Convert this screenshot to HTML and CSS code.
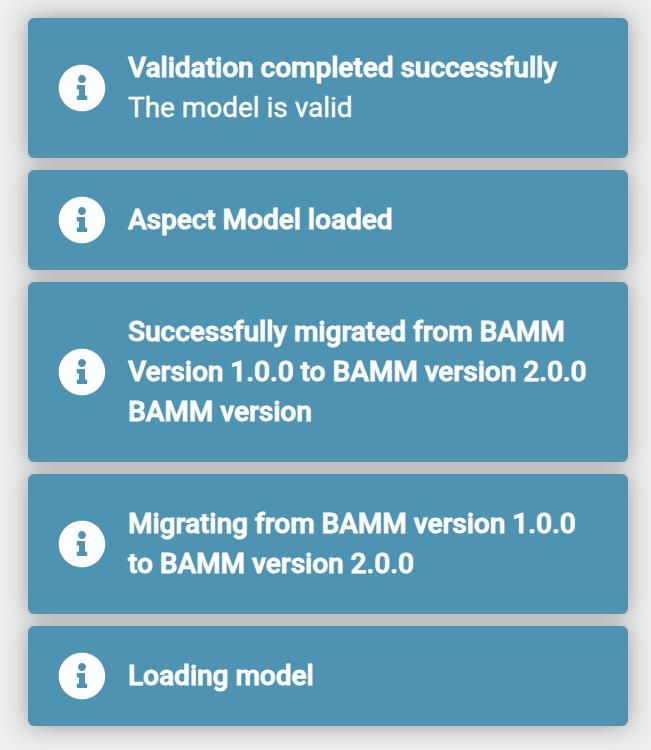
FILE: index.html
```html
<!DOCTYPE html>
<html lang="en">
<head>
<meta charset="utf-8">
<title>Notifications</title>
<link rel="stylesheet" href="styles.css">
</head>
<body>
<svg width="0" height="0" class="defs"><symbol id="info" viewBox="0 0 512 512"><path d="M256 8C119.043 8 8 119.083 8 256c0 136.997 111.043 248 248 248s248-111.003 248-248C504 119.083 392.957 8 256 8zm0 110c23.196 0 42 18.804 42 42s-18.804 42-42 42-42-18.804-42-42 18.804-42 42-42zm56 254c0 6.627-5.373 12-12 12h-88c-6.627 0-12-5.373-12-12v-24c0-6.627 5.373-12 12-12h12v-64h-12c-6.627 0-12-5.373-12-12v-24c0-6.627 5.373-12 12-12h64c6.627 0 12 5.373 12 12v100h12c6.627 0 12 5.373 12 12v24z"/></symbol></svg>
<main class="toasts">
<section class="toast"><svg class="icon"><use href="#info"/></svg><div class="copy"><div class="title">Validation completed successfully</div><div class="message">The model is valid</div></div></section>
<section class="toast"><svg class="icon"><use href="#info"/></svg><div class="copy"><div class="title">Aspect Model loaded</div></div></section>
<section class="toast"><svg class="icon"><use href="#info"/></svg><div class="copy"><div class="title">Successfully migrated from BAMM<br>Version 1.0.0 to BAMM version 2.0.0<br>BAMM version</div></div></section>
<section class="toast"><svg class="icon"><use href="#info"/></svg><div class="copy"><div class="title">Migrating from BAMM version 1.0.0<br>to BAMM version 2.0.0</div></div></section>
<section class="toast"><svg class="icon"><use href="#info"/></svg><div class="copy"><div class="title">Loading model</div></div></section>
</main>
</body>
</html>
```
FILE: styles.css
```css
body {
  margin: 0;
  background: #eee;
  font: 28px/40px Roboto, sans-serif;
  color: #fff;
}
.defs { display: none; }
.toasts {
  display: flex;
  flex-direction: column;
  gap: 12px;
  box-sizing: border-box;
  min-height: 750px;
  padding: 18px 23px 24px 28px;
}
.toast {
  display: flex;
  align-items: center;
  box-sizing: border-box;
  padding: 30px;
  border-radius: 6px;
  background: #4e93b1;
  box-shadow: 0 0 24px #999;
}
.icon {
  flex: none;
  width: 48px;
  height: 48px;
  margin: -4px 22px -4px 0;
  fill: #fff;
}
.copy { white-space: nowrap; }
.title {
  font-weight: 500;
  -webkit-text-stroke: 0.9px #fff;
}
.message {
  letter-spacing: -0.03px;
  -webkit-text-stroke: 0.4px #fff;
}
```
